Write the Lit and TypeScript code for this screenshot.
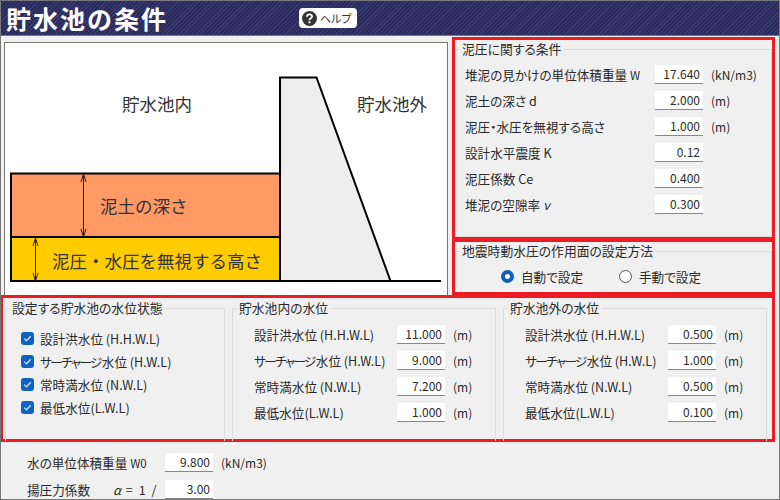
import { LitElement, html, css, svg } from "lit";
import { customElement } from "lit/decorators.js";

const row = (label: unknown, value: string, unit = "") => html`
  <div class="row">
    <span class="lab">${label}</span>
    <span class="inp">${value}</span>
    <span class="unit">${unit}</span>
  </div>`;

const levels = [
  html`設計洪水位 (H.H.W.L)`,
  html`<span class="kana">サーチャージ</span>水位 (H.W.L)`,
  html`常時満水位 (N.W.L)`,
  html`最低水位(L.W.L)`,
];

const arrow = (x: number, y1: number, y2: number) => svg`
  <path d="M${x} ${y1}V${y2}M${x - 2.5} ${y1 + 8}L${x} ${y1}L${x + 2.5} ${y1 + 8}M${x - 2.5} ${y2 - 8}L${x} ${y2}L${x + 2.5} ${y2 - 8}" fill="none" stroke="#222" stroke-width="1"/>`;

@customElement("app-root")
export class AppRoot extends LitElement {
  static styles = css`
    :host {
      display: block;
      width: 780px;
      height: 500px;
      font-family: "Noto Sans CJK JP", "Noto Sans", sans-serif;
      font-size: 12.6px;
      color: #2a2a2a;
      font-feature-settings: "palt";
    }
    * { box-sizing: border-box; }
    .frame {
      width: 780px;
      height: 500px;
      border: 1px solid #777;
      background: #f0f0f0;
      display: flex;
      flex-direction: column;
      overflow: hidden;
    }
    .title {
      height: 35px;
      flex: none;
      display: flex;
      align-items: center;
      border-bottom: 1px solid #777;
      background: repeating-linear-gradient(135deg, #2b2a5c 0 2px, #3d3c72 2px 3px);
    }
    h1 {
      margin: 0 0 0 5px;
      width: 293px;
      font-size: 25px;
      line-height: 34px;
      font-weight: 700;
      letter-spacing: 2px;
      color: #fff;
      font-feature-settings: normal;
    }
    .help {
      width: 58px;
      height: 20px;
      background: #fff;
      border-radius: 4px;
      display: flex;
      align-items: center;
      gap: 3px;
      padding-left: 3px;
      font-size: 11px;
      color: #333;
    }
    .help svg { display: block; }
    .top {
      display: flex;
      height: 259px;
      flex: none;
      align-items: stretch;
    }
    .canvas {
      width: 444px;
      margin: 6px 0 0 3px;
      height: 253px;
      flex: none;
      background: #fff;
      border: 1px solid #777;
      border-bottom: none;
      font-feature-settings: normal;
    }
    .canvas svg { display: block; }
    .canvas text { font-size: 17.5px; fill: #333; font-family: "Noto Sans CJK JP", sans-serif; }
    .side {
      margin: 1px 0 0 4px;
      width: 323px;
      display: flex;
      flex-direction: column;
    }
    .red { border: 3px solid #ed1c24; }
    .box1 { height: 204px; }
    .box2 { height: 56px; margin-top: -1px; }
    fieldset {
      margin: 0;
      padding: 0;
      border: 1px solid #dcdcdc;
      min-width: 0;
    }
    legend {
      padding: 0 3px 0 2px;
      margin-left: 4px;
      line-height: 16px;
      font-size: 12.8px;
    }
    .box1 fieldset { height: 196px; margin-top: 1px; }
    .box1 .body { padding: 8px 0 0 9px; }
    .row {
      display: flex;
      align-items: center;
      height: 19px;
      margin-bottom: 7px;
      white-space: nowrap;
    }
    .lab { flex: none; }
    .kana { letter-spacing: -1.6px; margin-right: 1px; }
    .box1 .lab { width: 190px; }
    .inp {
      flex: none;
      width: 48px;
      height: 19px;
      background: #fff;
      border-bottom: 1px solid #888;
      text-align: right;
      padding-right: 3px;
      line-height: 18px;
      font-size: 12px;
    }
    .unit { margin-left: 8px; font-size: 12px; }
    .box2 fieldset { height: 47px; margin-top: 1px; border-bottom: none; }
    .radios { display: flex; padding: 6px 0 0 45px; height: 28px; align-items: center; }
    .radio { display: flex; align-items: center; gap: 7px; width: 118px; }
    .dot {
      width: 13px;
      height: 13px;
      border-radius: 50%;
      border: 1px solid #555;
      background: #fff;
    }
    .dot.on { border: 4px solid #0a5fb8; }
    .box3 {
      width: 774px;
      height: 147px;
      flex: none;
      border-left-width: 2px;
      display: flex;
      padding-left: 2px;
    }
    .box3 fieldset { height: 141px; border-bottom: none; margin-top: 2px; }
    .fa { width: 220px; }
    .fa .body { padding: 11px 0 0 15px; }
    .fb, .fc { width: 264px; margin-left: 7px; }
    .fb .body, .fc .body { padding: 9px 0 0 21px; }
    .box3 .lab { width: 143px; }
    .check {
      display: flex;
      align-items: center;
      gap: 6px;
      height: 23px;
      white-space: nowrap;
    }
    .check i {
      width: 13px;
      height: 13px;
      background: #0d62c4;
      border-radius: 3px;
      display: block;
      flex: none;
    }
    .check svg { display: block; }
    .foot { padding: 11px 0 0 26px; }
    .foot .row { height: 19px; margin-bottom: 8px; }
    .foot .lab { width: 138px; display: flex; align-items: center; }
    .alpha { margin-left: 23px; font-style: italic; }
    .eq { margin-left: 5px; word-spacing: 3px; }
    .sm { font-size: 11.5px; }
  `;

  render() {
    return html`
      <div class="frame">
        <div class="title">
          <h1>貯水池の条件</h1>
          <div class="help">
            <svg width="15" height="15" viewBox="0 0 14 14">
              <circle cx="7" cy="7" r="7" fill="#333" />
              <path d="M4.6 5.4C4.6 2.4 9.4 2.4 9.4 5.2C9.4 6.9 7 6.8 7 8.6" fill="none" stroke="#fff" stroke-width="1.7" />
              <rect x="6.1" y="9.6" width="1.8" height="1.8" fill="#fff" />
            </svg>
            <span>ヘルプ</span>
          </div>
        </div>
        <div class="top">
          <div class="canvas">
            <svg width="442" height="252" viewBox="5 43 442 252">
              <rect x="11" y="173" width="269" height="64" fill="#ff9966" />
              <rect x="11" y="237" width="269" height="44" fill="#ffcc00" />
              <path d="M280 281V77.5H316.5L390.5 281" fill="#eee" stroke="#000" stroke-width="2" />
              <path d="M280 173.5H11V281M12 237H280M10 281H441" fill="none" stroke="#000" stroke-width="2" />
              ${arrow(83.5, 174, 237)} ${arrow(35.5, 238, 281)}
              <text x="122" y="111">貯水池内</text>
              <text x="357" y="111">貯水池外</text>
              <text x="100" y="213">泥土の深さ</text>
              <text x="52" y="268">泥圧・水圧を無視する高さ</text>
            </svg>
          </div>
          <div class="side">
            <div class="red box1">
              <fieldset>
                <legend>泥圧に関する条件</legend>
                <div class="body">
                  ${row(html`堆泥の見かけの単位体積重量 <span class="sm">W</span>`, "17.640", "(kN/m3)")}
                  ${row("泥土の深さ d", "2.000", "(m)")}
                  ${row("泥圧・水圧を無視する高さ", "1.000", "(m)")}
                  ${row("設計水平震度 K", "0.12")}
                  ${row("泥圧係数 Ce", "0.400")}
                  ${row(html`堆泥の空隙率 <i>ν</i>`, "0.300")}
                </div>
              </fieldset>
            </div>
            <div class="red box2">
              <fieldset>
                <legend>地震時動水圧の作用面の設定方法</legend>
                <div class="radios">
                  <div class="radio"><span class="dot on"></span>自動で設定</div>
                  <div class="radio"><span class="dot"></span>手動で設定</div>
                </div>
              </fieldset>
            </div>
          </div>
        </div>
        <div class="red box3">
          <fieldset class="fa">
            <legend>設定する貯水池の水位状態</legend>
            <div class="body">
              ${levels.map(
                (l) => html`<div class="check">
                  <i><svg width="13" height="13" viewBox="0 0 13 13"><path d="M3.2 6.6L5.5 8.8L9.8 4.2" fill="none" stroke="#cfe2f7" stroke-width="1.3" /></svg></i>
                  <span>${l}</span>
                </div>`,
              )}
            </div>
          </fieldset>
          <fieldset class="fb">
            <legend>貯水池内の水位</legend>
            <div class="body">
              ${levels.map((l, i) => row(l, ["11.000", "9.000", "7.200", "1.000"][i], "(m)"))}
            </div>
          </fieldset>
          <fieldset class="fc">
            <legend>貯水池外の水位</legend>
            <div class="body">
              ${levels.map((l, i) => row(l, ["0.500", "1.000", "0.500", "0.100"][i], "(m)"))}
            </div>
          </fieldset>
        </div>
        <div class="foot">
          ${row(html`水の単位体積重量&nbsp;<span class="sm">W0</span>`, "9.800", "(kN/m3)")}
          ${row(html`揚圧力係数<span class="alpha">α</span><span class="eq">= 1 /</span>`, "3.00")}
        </div>
      </div>
    `;
  }
}
